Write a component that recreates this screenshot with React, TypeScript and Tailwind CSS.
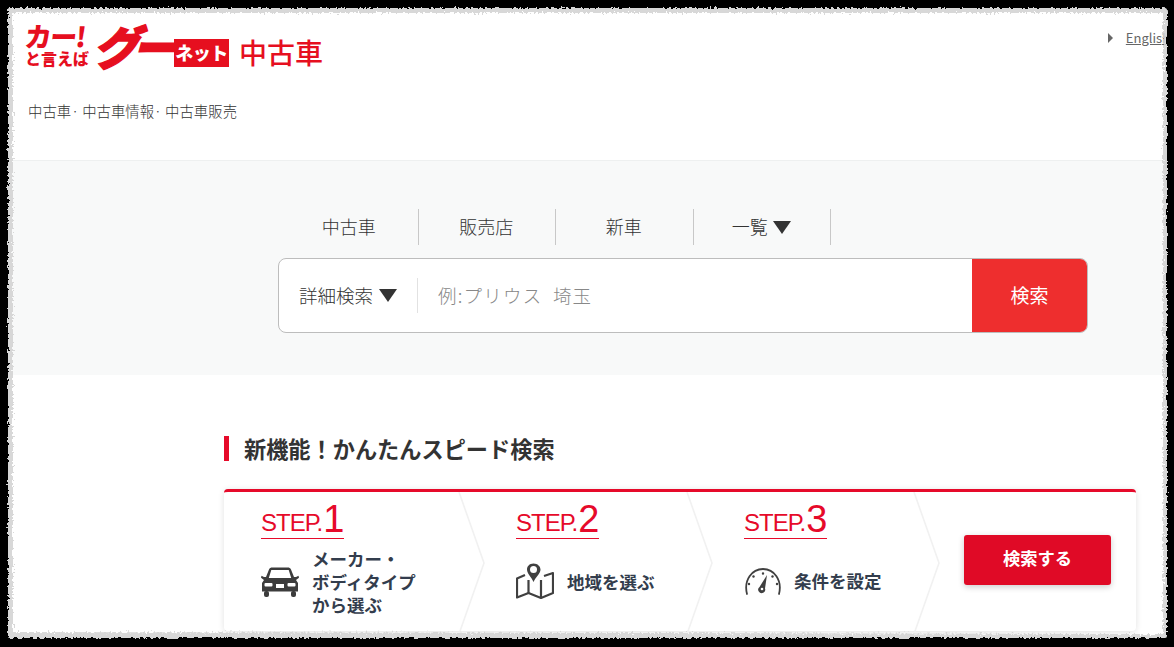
const jp = "font-['Noto_Sans_CJK_JP','Noto_Sans',sans-serif]";

function Chevron() {
  return (
    <svg className="absolute right-[-28px] top-0 z-10" width="28" height="142" viewBox="0 0 28 142" fill="none">
      <path d="M1 0L26 71L1 142" stroke="#f1f1f1" strokeWidth="1.6" />
    </svg>
  );
}

function StepLabel({ n }: { n: number }) {
  return (
    <div className="flex h-[41px] w-[83px] items-end whitespace-nowrap border-b border-[#e60a2a] font-['Liberation_Sans',sans-serif] text-[#e60a2a]">
      <span className="text-[24px] leading-[31px] tracking-[-1px]">STEP.</span>
      <span className="ml-[1px] text-[38px] leading-[38px]">{n}</span>
    </div>
  );
}

function Car() {
  return (
    <svg width="38" height="30" viewBox="0 0 38 30" fill="#3c3c3c">
      <path d="M8 2.500C8.600 1 10 .5 11 .5H27C28 .5 29.400 1 30 2.500L33 10H35L37.500 8.800 38 10.800 35 13 37 16V24.500H1V16L3 13 0 10.800.5 8.800 3 10H5ZM10.300 3L7.800 11H30.200L27.700 3Z" fillRule="evenodd" />
      <rect x="3" y="24" width="5" height="6" rx="2" />
      <rect x="30" y="24" width="5" height="6" rx="2" />
      <rect x="3.500" y="16" width="8" height="3.500" rx="1" fill="#fff" />
      <rect x="26.500" y="16" width="8" height="3.500" rx="1" fill="#fff" />
      <rect x="15" y="17" width="8" height="4" fill="#fff" />
    </svg>
  );
}

function MapIcon() {
  return (
    <svg width="38" height="37" viewBox="0 0 38 37" fill="none" stroke="#404040" strokeWidth="2.200" strokeLinejoin="round">
      <path d="M9 13L1 16.500V35.500L12.500 31L25 36L37 31V11L28 14" />
      <path d="M12.500 18V31M25 18V36" />
      <path d="M17.500 1.500C13.300 1.500 11 4.500 11 7.500C11 11.500 15.500 15 17.500 20C19.500 15 24.500 11.500 24.500 7.500C24.500 4.500 21.700 1.500 17.500 1.500Z" fill="#404040" stroke="none" />
      <circle cx="17.500" cy="7.500" r="3.500" fill="#fff" stroke="none" />
    </svg>
  );
}

function Gauge() {
  return (
    <svg width="38" height="27" viewBox="0 0 38 27" fill="none" stroke="#404040">
      <path d="M3 26C-.5 12 8 1 19 1C30 1 38.500 12 35 26" strokeWidth="1.800" strokeLinecap="round" />
      <g fill="#404040" stroke="none">
        <circle cx="19" cy="5.500" r="1.200" /><circle cx="9.500" cy="8.500" r="1.200" /><circle cx="28.500" cy="8.500" r="1.200" />
        <circle cx="5" cy="16" r="1.200" /><circle cx="33" cy="16" r="1.200" />
        <path d="M23 7L21 20.500A3.500 3.500 0 1 1 15.500 19Z" />
      </g>
      <circle cx="18" cy="21" r="1.300" fill="#fff" stroke="none" />
    </svg>
  );
}

export default function App() {
  return (
    <div className={`relative h-[647px] w-[1174px] overflow-hidden bg-white ${jp}`}>
      <header className="h-[161px] border-b border-[#eef0f0] pl-[25px] pt-[22px]">
        <div className="flex items-start justify-between">
          <div className="flex h-[46px] items-center text-[#e60f1f]">
            <div className="flex w-[66px] flex-col font-black">
              <span className="h-[27px] -skew-x-6 whitespace-nowrap text-[27px] leading-[27px] tracking-[-1.500px]">カー!</span>
              <span className="whitespace-nowrap text-[16px] leading-[19px] tracking-[0px]">と言えば</span>
            </div>
            <span className="ml-[7px] w-[74px] -skew-x-[15deg] whitespace-nowrap text-[46px] font-black leading-[46px] tracking-[-7px] [-webkit-text-stroke:1.500px_#e60f1f]">グー</span>
            <span className="ml-[2px] mt-[15px] flex h-[28px] w-[55px] items-center justify-center bg-[#e60f1f] text-[18px] font-black tracking-[-.5px] text-white">ネット</span>
            <span className="ml-[10px] mt-[14px] whitespace-nowrap text-[28px] font-medium leading-[40px]">中古車</span>
          </div>
          <div className="mr-[4px] mt-[9px] flex items-center whitespace-nowrap">
            <span className="mr-[13px] h-0 w-0 border-y-[5px] border-l-[5px] border-y-transparent border-l-[#666]" />
            <span className="text-[13px] leading-[14px] text-[#666] underline">English</span>
          </div>
        </div>
        <p className="ml-[3px] mt-[33px] whitespace-nowrap text-[14.400px] font-light leading-[20px] text-[#333]">中古車· 中古車情報· 中古車販売</p>
      </header>

      <section className="h-[214px] bg-[#f8f9f9] pl-[278px] pt-[48px]">
        <nav className="ml-[3px] flex h-[36px] text-[18px] font-light leading-[34px] text-[#333]">
          <div className="flex w-[137.500px] items-center justify-center border-r border-[#c8c8c8] pb-[2px] pr-[1px]">中古車</div>
          <div className="flex w-[137.500px] items-center justify-center border-r border-[#c8c8c8] pb-[2px] pr-[1px]">販売店</div>
          <div className="flex w-[137.500px] items-center justify-center border-r border-[#c8c8c8] pb-[2px] pr-[1px]">新車</div>
          <div className="flex w-[137.500px] items-center justify-center gap-[5px] border-r border-[#c8c8c8] pr-[1px]">
            <span className="pb-[2px]">一覧</span>
            <span className="h-0 w-0 border-x-[9px] border-t-[13px] border-x-transparent border-t-[#333]" />
          </div>
        </nav>
        <div className="mt-[13px] flex h-[75px] w-[810px] overflow-hidden rounded-[8px] border border-[#bdbdbd] bg-white">
          <div className="flex flex-1 items-center pl-[20px]">
            <span className="text-[18.500px] font-light text-[#333]">詳細検索</span>
            <span className="ml-[6px] h-0 w-0 border-x-[9px] border-t-[13px] border-x-transparent border-t-[#333]" />
            <span className="ml-[20px] h-[35px] w-px bg-[#e2e2e2]" />
            <span className="ml-[20px] whitespace-pre text-[18.500px] font-light tracking-[1.200px] text-[#888]">例:プリウス  埼玉</span>
          </div>
          <div className="flex w-[115px] items-center justify-center bg-[#ee2e2e] text-[19px] text-white">検索</div>
        </div>
      </section>

      <section className="pl-[224px] pt-[61px]">
        <h2 className="h-[25px] border-l-[5px] border-[#e60a2a] pl-[15px] text-[22.200px] font-bold leading-[25px] text-[#333]">新機能！かんたんスピード検索</h2>
        <div className="mt-[28px] flex h-[142px] w-[912px] rounded-[4px] border-t-[3px] border-[#e60a2a] bg-white shadow-[0_1px_6px_rgba(0,0,0,0.12)]">
          <div className="relative w-[234px] pl-[37px] pt-[6px]">
            <StepLabel n={1} />
            <div className="mt-[8px] flex items-center">
              <Car />
              <span className="ml-[13px] text-[17.500px] font-bold leading-[23px] text-[#333d4d]">メーカー・<br />ボディタイプ<br />から選ぶ</span>
            </div>
            <Chevron />
          </div>
          <div className="relative w-[228px] pl-[58px] pt-[6px]">
            <StepLabel n={2} />
            <div className="mt-[23px] flex items-center">
              <MapIcon />
              <span className="ml-[13px] mt-[3px] text-[17.500px] font-bold text-[#333d4d]">地域を選ぶ</span>
            </div>
            <Chevron />
          </div>
          <div className="relative w-[227px] pl-[58px] pt-[6px]">
            <StepLabel n={3} />
            <div className="mt-[29px] flex items-center">
              <Gauge />
              <span className="ml-[12px] text-[17.500px] font-bold text-[#333d4d]">条件を設定</span>
            </div>
            <Chevron />
          </div>
          <div className="flex flex-1 justify-end pr-[25px] pt-[43px]">
            <div className="flex h-[50px] w-[147px] items-center justify-center rounded-[3px] bg-[#e00a26] pb-[4px] text-[17.300px] font-bold text-white shadow-[0_2px_6px_rgba(0,0,0,0.2)]">検索する</div>
          </div>
        </div>
      </section>

      <svg className="pointer-events-none absolute inset-0 z-20" width="1174" height="647" viewBox="0 0 1174 647">
        <defs>
          <filter id="torn" x="-5%" y="-5%" width="110%" height="110%">
            <feTurbulence type="fractalNoise" baseFrequency="0.35" numOctaves="2" seed="4" result="n" />
            <feDisplacementMap in="SourceGraphic" in2="n" scale="5" />
          </filter>
          <filter id="soft" x="-5%" y="-5%" width="110%" height="110%">
            <feTurbulence type="fractalNoise" baseFrequency="0.5" numOctaves="2" seed="9" result="n" />
            <feDisplacementMap in="SourceGraphic" in2="n" scale="7" />
            <feGaussianBlur stdDeviation="0.6" />
          </filter>
        </defs>
        <path filter="url(#soft)" fillRule="evenodd" fill="#d2d2d2" opacity="0.85" d="M-30-30H1204V677H-30ZM13 13V632L1163 634V13Z" />
        <path filter="url(#torn)" fillRule="evenodd" fill="#000" d="M-30-30H1204V677H-30ZM8 9Q8 8 9 8H1165Q1167 8 1167 11V636Q1167 638 1165 638H9Q8 638 8 636Z" />
      </svg>
    </div>
  );
}
